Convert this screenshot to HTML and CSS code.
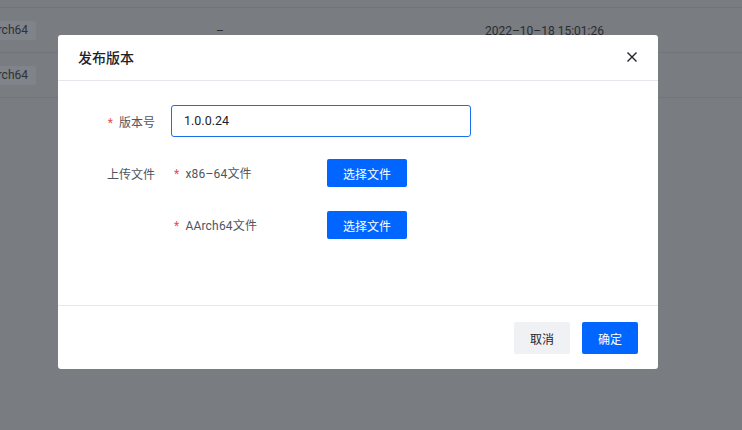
FILE: index.html
```html
<!DOCTYPE html>
<html lang="zh-CN">
<head>
<meta charset="utf-8">
<link rel="stylesheet" href="styles.css">
</head>
<body>
<div class="table">
  <div class="thead"></div>
  <div class="row">
    <div class="cell c1"><span class="tag">AArch64</span></div>
    <div class="cell c2">–</div>
    <div class="cell c3">2022–10–18 15:01:26</div>
  </div>
  <div class="row">
    <div class="cell c1"><span class="tag">AArch64</span></div>
    <div class="cell c2"></div>
    <div class="cell c3"></div>
  </div>
</div>

<div class="modal">
  <div class="modal-header">
    <span class="modal-title">发布版本</span>
    <svg class="close" width="12" height="12" viewBox="0 0 12 12"><path d="M1.5 1.5 L10.5 10.5 M10.5 1.5 L1.5 10.5" stroke="#1f2329" stroke-width="1.4" fill="none"/></svg>
  </div>
  <div class="modal-body">
    <div class="form-row">
      <div class="label"><span class="req">*</span>版本号</div>
      <div class="input">1.0.0.24</div>
    </div>
    <div class="form-row">
      <div class="label">上传文件</div>
      <div class="sub-label"><span class="req">*</span>x86–64文件</div>
      <button class="btn primary small">选择文件</button>
    </div>
    <div class="form-row">
      <div class="label"></div>
      <div class="sub-label"><span class="req">*</span>AArch64文件</div>
      <button class="btn primary small">选择文件</button>
    </div>
  </div>
  <div class="modal-footer">
    <button class="btn secondary">取消</button>
    <button class="btn primary">确定</button>
  </div>
</div>
</body>
</html>
```
FILE: styles.css
```css
html, body {
  margin: 0;
  padding: 0;
}
body {
  width: 742px;
  height: 430px;
  background: #797c81;
  font-family: Roboto, "Noto Sans CJK SC", sans-serif;
  overflow: hidden;
  position: relative;
}
.table {
  display: flex;
  flex-direction: column;
}
.thead {
  height: 8px;
  border-bottom: 1px solid #717479;
  box-sizing: border-box;
}
.row {
  height: 45px;
  display: flex;
  align-items: center;
  border-bottom: 1px solid #717479;
  box-sizing: border-box;
  font-size: 12px;
  color: #2a2c30;
  padding-top: 2px;
}
.cell.c1 {
  width: 240px;
  margin-left: -24px;
}
.cell.c2 {
  width: 269px;
}
.cell.c3 {
  flex: 1;
}
.tag {
  display: inline-block;
  background: #808389;
  padding: 0 8px 0 6px;
  height: 19px;
  line-height: 19px;
  border-radius: 2px;
  color: #2f3136;
  margin-top: -2px;
}
.modal {
  position: absolute;
  left: 58px;
  top: 35px;
  width: 600px;
  height: 334px;
  background: #fff;
  border-radius: 3px;
  display: flex;
  flex-direction: column;
}
.modal-header {
  height: 46px;
  box-sizing: border-box;
  border-bottom: 1px solid #e5e7ec;
  display: flex;
  align-items: center;
  justify-content: space-between;
  padding: 0 20px 2px 20px;
}
.modal-title {
  font-size: 14px;
  font-weight: 500;
  color: #1f2329;
}
.close {
  display: block;
}
.modal-body {
  height: 224px;
  box-sizing: border-box;
  padding: 24px 20px 0 20px;
  display: flex;
  flex-direction: column;
  gap: 20px;
}
.form-row {
  height: 32px;
  display: flex;
  align-items: center;
}
.label {
  width: 77px;
  margin-right: 16px;
  text-align: right;
  font-size: 12px;
  color: #4e5461;
}
.req {
  color: #e34d59;
  margin-right: 6px;
}
.input {
  width: 300px;
  height: 32px;
  box-sizing: border-box;
  border: 1px solid #1a6ff0;
  border-radius: 3px;
  padding: 0 12px;
  font-size: 12.5px;
  color: #1f2329;
  line-height: 30px;
}
.sub-label {
  width: 153px;
  padding-left: 3px;
  font-size: 12px;
  color: #4e5461;
  letter-spacing: 0.2px;
  margin-top: -2px;
}
.btn {
  border: none;
  font-family: inherit;
  font-size: 12px;
  border-radius: 2px;
  height: 32px;
  width: 56px;
  padding: 0;
  cursor: pointer;
}
.btn.small {
  width: 80px;
  height: 28px;
}
.btn.primary {
  background: #0066ff;
  color: #fff;
}
.btn.secondary {
  background: #f0f1f5;
  color: #1f2329;
}
.modal-footer {
  flex: 1;
  border-top: 1px solid #e5e7ec;
  display: flex;
  justify-content: flex-end;
  align-items: flex-start;
  padding: 16px 20px 0 0;
  gap: 12px;
}
```
